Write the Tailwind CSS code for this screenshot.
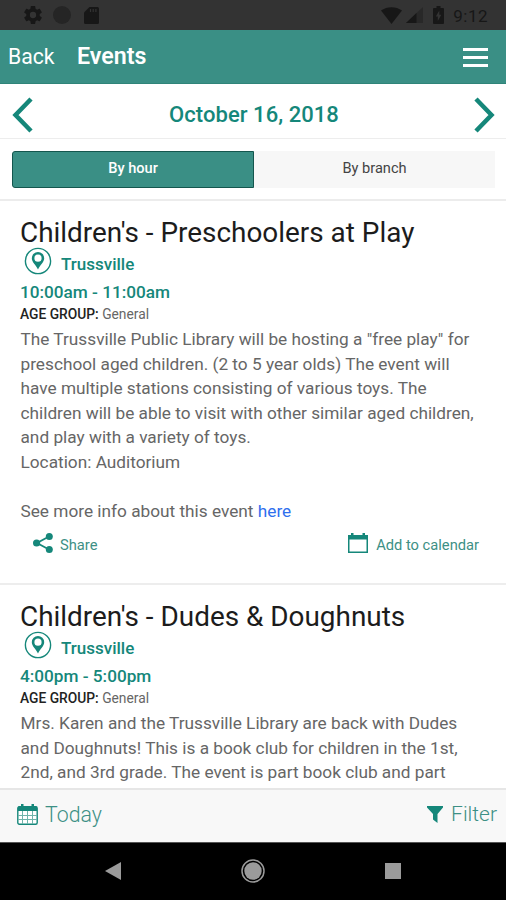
<!DOCTYPE html>
<html lang="en">
<head>
  <meta charset="UTF-8" />
  <meta name="viewport" content="width=device-width,initial-scale=1.0" />
  <title>Events</title>
  <script src="https://cdn.jsdelivr.net/npm/@tailwindcss/browser@4"></script>
</head>
<body class="bg-white font-[Roboto,sans-serif]">

  <!-- Shared icons -->
  <svg class="hidden">
    <symbol id="pin" viewBox="0 0 28 28">
      <circle cx="14" cy="14" r="12.6" fill="none" stroke="currentColor" stroke-width="1.4" />
      <path fill="currentColor" fill-rule="evenodd" d="M14 5a6.2 6.2 0 0 0-6.2 6.2c0 4 4.3 6.8 6.2 11.3 1.9-4.5 6.2-7.3 6.2-11.3A6.2 6.2 0 0 0 14 5zm0 2.600a3.600 3.600 0 1 1 0 7.200 3.600 3.600 0 0 1 0-7.200z" />
    </symbol>
  </svg>

  <div class="h-[900px] w-[506px] flex flex-col overflow-hidden">

    <!-- Status bar -->
    <div class="h-[30px] shrink-0 bg-[#333333] flex items-center pl-6 pr-[18px] text-[#171717]">
      <svg class="size-[18px]" viewBox="2 2 20 20" fill="currentColor"><path d="M19.430 12.980c.04-.32.07-.64.07-.98s-.03-.66-.07-.98l2.110-1.650c.19-.15.24-.42.12-.64l-2-3.460c-.12-.22-.39-.3-.61-.22l-2.490 1c-.52-.4-1.080-.73-1.690-.98l-.38-2.650A.49.49 0 0 0 14 2h-4c-.25 0-.46.18-.49.42l-.38 2.650c-.61.25-1.170.59-1.690.98l-2.490-1c-.23-.09-.49 0-.61.22l-2 3.460c-.13.22-.07.49.12.64l2.110 1.650c-.04.32-.07.65-.07.98s.03.66.07.98l-2.110 1.650c-.19.15-.24.42-.12.64l2 3.460c.12.22.39.3.61.22l2.490-1c.52.4 1.080.73 1.690.98l.38 2.650c.03.24.24.42.49.42h4c.25 0 .46-.18.49-.42l.38-2.650c.61-.25 1.170-.59 1.690-.98l2.490 1c.23.09.49 0 .61-.22l2-3.460c.12-.22.07-.49-.12-.64l-2.110-1.650zM12 15.500a3.500 3.500 0 1 1 0-7 3.500 3.500 0 0 1 0 7z" /></svg>
      <div class="ml-[11px] size-[18px] rounded-full bg-[#252525]"></div>
      <svg class="ml-[13px] w-[15px] h-[17px]" viewBox="0 0 15 17"><path fill="currentColor" d="M5.500 0H13.500Q15 0 15 1.500V15.500Q15 17 13.500 17H1.500Q0 17 0 15.500V5.500z" /><path stroke="#333" stroke-width="1.200" d="M6.500 2v3M9.200 2v3M11.900 2v3" /></svg>
      <div class="ml-auto flex items-center">
        <svg class="w-[21px] h-[17px]" viewBox="0 0 21 17"><path fill="currentColor" d="M0 3.500C6-1 15-1 21 3.500L10.500 17z" /></svg>
        <svg class="ml-[4px] w-[17px] h-[16px]" viewBox="0 0 17 16"><path fill="#282828" d="M17 0v16H0z" /><path fill="currentColor" d="M10.500 6v10H0z" /></svg>
        <svg class="ml-[10px] w-[11px] h-[18px]" viewBox="0 0 11 18"><path fill="currentColor" d="M3.500 0h4v2H10q1 0 1 1v14q0 1-1 1H1q-1 0-1-1V3q0-1 1-1h2.500z" /><path fill="#333" d="M6.300 4.500v4.300h2L4.800 15v-4.600h-2z" /></svg>
        <span class="ml-[9px] text-[17px] leading-none tracking-[0.5px] pt-[2px]">9:12</span>
      </div>
    </div>

    <!-- Header -->
    <header class="h-[54px] shrink-0 bg-[#3a8f85] flex items-center pl-2 pr-[18px] text-white border-b border-[#2f8479]">
      <span class="w-[69px] text-[21.2px]">Back</span>
      <h1 class="text-[23.2px] font-semibold">Events</h1>
      <div class="ml-auto pt-px w-[25px] flex flex-col gap-[5px]">
        <div class="h-[3px] bg-white"></div>
        <div class="h-[3px] bg-white"></div>
        <div class="h-[3px] bg-white"></div>
      </div>
    </header>

    <!-- Date picker -->
    <div class="h-[55px] shrink-0 flex items-center justify-between pl-3 pr-[11px] pt-[7px] border-b border-[#ededed] text-[#15877a]">
      <svg class="w-[21px] h-[36px]" viewBox="0 0 21 36" fill="none" stroke="currentColor" stroke-width="4.500"><path d="M19 2L3.500 18 19 34" /></svg>
      <span class="pl-px text-[22px] font-medium tracking-[0.05px]">October 16, 2018</span>
      <svg class="w-[21px] h-[36px]" viewBox="0 0 21 36" fill="none" stroke="currentColor" stroke-width="4.500"><path d="M2 2l15.500 16L2 34" /></svg>
    </div>

    <!-- Tabs -->
    <div class="h-[62px] shrink-0 flex pl-3 pr-[11px] pt-3 pb-[13px] border-b-2 border-[#ececec] text-[14.600px]">
      <div class="w-[242px] h-[37px] rounded-l-[3px] border border-[#14564e] bg-[#3a8f85] text-white font-medium flex items-center justify-center pb-[2px]">By hour</div>
      <div class="flex-1 h-[37px] bg-[#f7f7f7] text-[#444] flex items-center justify-center pb-[2px]">By branch</div>
    </div>

    <!-- Events -->
    <main class="flex-1 min-h-0 overflow-hidden">
      <article class="h-[384px] px-5 pt-[15px] border-b-2 border-[#ededed]">
        <h2 class="h-8 leading-[34px] text-[27.900px] text-[#1c1c1c] whitespace-nowrap">Children's - Preschoolers at Play</h2>
        <div class="h-[29px] pl-1 flex items-start text-[#15877a]">
          <svg class="size-7 -mt-px"><use href="#pin" /></svg>
          <span class="ml-[9px] leading-[32px] text-[17px] font-medium">Trussville</span>
        </div>
        <p class="h-[28px] leading-[30px] text-[17.200px] font-medium text-[#15877a]">10:00am - 11:00am</p>
        <p class="h-[22px] leading-[19px] text-[13.800px] text-[#666]"><b class="font-medium text-[#222]">AGE GROUP:</b> General</p>
        <p class="pl-[0.500px] leading-[24.600px] text-[17.240px] text-[#666] whitespace-nowrap">The Trussville Public Library will be hosting a "free play" for<br>preschool aged children. (2 to 5 year olds) The event will<br>have multiple stations consisting of various toys. The<br>children will be able to visit with other similar aged children,<br>and play with a variety of toys.<br>Location: Auditorium<br><br>See more info about this event <a class="text-[#2f6fee]">here</a></p>
        <div class="h-[42px] pl-[13px] pr-[7px] flex items-center justify-between text-[14.700px] text-[#3d9085]">
          <span class="flex items-center gap-[7px]">
            <svg class="w-5 h-5 -mt-[3px]" viewBox="0 0 20 20" fill="#15877a"><path d="M16 3.500L4 10l12 6.500" fill="none" stroke="#15877a" stroke-width="1.800" /><circle cx="16.300" cy="3.600" r="3.500" /><circle cx="3.600" cy="10" r="3.600" /><circle cx="16.300" cy="16.400" r="3.500" /></svg>
            Share
          </span>
          <span class="flex items-center gap-[8px]">
            <svg class="w-5 h-5 -mt-[3px]" viewBox="0 0 20 20"><path fill="#15877a" fill-rule="evenodd" d="M0 2h3V0h2.500v2h9V0H17v2h3v18H0zM1.500 6.500v12h17v-12z" /></svg>
            Add to calendar
          </span>
        </div>
      </article>

      <article class="px-5 pt-[15px]">
        <h2 class="h-8 leading-[34px] text-[27.900px] text-[#1c1c1c] whitespace-nowrap">Children's - Dudes &amp; Doughnuts</h2>
        <div class="h-[29px] pl-1 flex items-start text-[#15877a]">
          <svg class="size-7 -mt-px"><use href="#pin" /></svg>
          <span class="ml-[9px] leading-[32px] text-[17px] font-medium">Trussville</span>
        </div>
        <p class="h-[28px] leading-[30px] text-[17.200px] font-medium text-[#15877a]">4:00pm - 5:00pm</p>
        <p class="h-[22px] leading-[19px] text-[13.800px] text-[#666]"><b class="font-medium text-[#222]">AGE GROUP:</b> General</p>
        <p class="pl-[0.500px] leading-[24.600px] text-[17.240px] text-[#666] whitespace-nowrap">Mrs. Karen and the Trussville Library are back with Dudes<br>and Doughnuts! This is a book club for children in the 1st,<br>2nd, and 3rd grade. The event is part book club and part</p>
      </article>
    </main>

    <!-- Bottom toolbar -->
    <footer class="h-[54px] shrink-0 bg-[#f8f8f8] border-t-2 border-[#e6e6e6] flex items-center justify-between pl-[17px] pr-[9px] pb-[3px] text-[21.300px] font-light text-[#3d9085]">
      <span class="flex items-center gap-[7px]">
        <svg class="w-[21px] h-[21px]" viewBox="0 0 21 21"><rect x=".8" y="2.800" width="19.400" height="17.400" rx="1.500" fill="#fff" stroke="#15877a" stroke-width="1.400" /><path fill="#15877a" d="M1 2.500h19V7H1zM4 0h2.500v3H4zM14.500 0H17v3h-2.500z" /><path stroke="#6fb3aa" d="M5.500 7v13M10.500 7v13M15.500 7v13M1 11.500h19M1 15.500h19" /></svg>
        Today
      </span>
      <span class="flex items-center gap-[8px]">
        <svg class="w-4 h-[17px]" viewBox="0 0 16 17"><path fill="#15877a" d="M0 0h16v1.500L10.500 8v9L6 13.500V8L0 1.500z" /></svg>
        <span class="text-[21px] pt-px">Filter</span>
      </span>
    </footer>

    <!-- Android navigation -->
    <nav class="h-[58px] shrink-0 bg-black flex items-center pl-[105px] pr-[105px] pb-[2px] justify-between border-t border-[#555]">
      <svg class="w-4 h-[18px]" viewBox="0 0 16 18"><path fill="#9b9b9b" d="M16 0v18L0 9z" /></svg>
      <svg class="size-6" viewBox="0 0 24 24"><circle cx="12" cy="12" r="8.700" fill="#9b9b9b" /><circle cx="12" cy="12" r="11" fill="none" stroke="#9b9b9b" stroke-width="1.500" /></svg>
      <div class="size-4 bg-[#9b9b9b]"></div>
    </nav>
  </div>
</body>
</html>
